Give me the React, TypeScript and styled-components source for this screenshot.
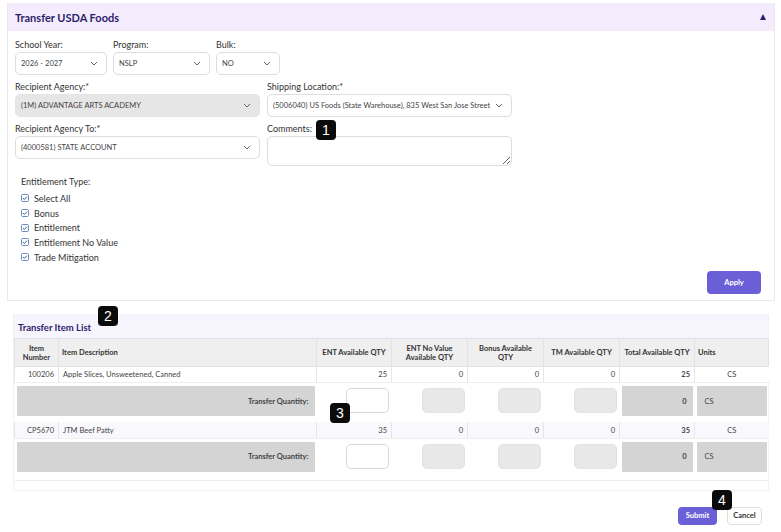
import React from 'react'
import styled, { createGlobalStyle } from 'styled-components'

const GlobalStyle = createGlobalStyle`
  html, body {
    margin: 0;
    padding: 0;
    background: #ffffff;
  }
  body {
    font-family: Lato, "Noto Sans", "Liberation Sans", sans-serif;
    color: #333333;
  }
`

const Page = styled.div`
  position: relative;
  width: 781px;
  height: 532px;
  padding: 3px 6px 0 7px;
  box-sizing: border-box;
`

const Panel = styled.section`
  border: 1px solid #e8e8e8;
  border-top: none;
  box-sizing: border-box;
`

const PanelHeader = styled.div`
  height: 28px;
  background: #f4ecfc;
  display: flex;
  align-items: center;
  justify-content: space-between;
  padding: 0 8px 0 7px;
`

const PanelTitle = styled.h2`
  margin: 0;
  font-size: 11px;
  font-weight: 700;
  color: #2c1d6b;
`

const Caret = styled.span`
  width: 0;
  height: 0;
  border-left: 3px solid transparent;
  border-right: 3px solid transparent;
  border-bottom: 6px solid #2c1d6b;
`

const PanelBody = styled.div`
  padding: 9px 13px 6px 7px;
  display: flex;
  flex-direction: column;
`

const FormRow = styled.div<{ $cols: string; $gap?: number; $last?: boolean }>`
  display: grid;
  grid-template-columns: ${({ $cols }) => $cols};
  column-gap: ${({ $gap }) => $gap ?? 6}px;
  align-items: start;
  margin-bottom: ${({ $last }) => ($last ? 0 : 7)}px;
`

const Field = styled.div`
  display: flex;
  flex-direction: column;
  gap: 2px;
`

const Label = styled.label`
  font-size: 9px;
  line-height: 10px;
  color: #333333;
`

const SelectBox = styled.div<{ $disabled?: boolean }>`
  height: 23px;
  box-sizing: border-box;
  border: 1px solid ${({ $disabled }) => ($disabled ? '#e4e4e4' : '#dddddd')};
  border-radius: 5px;
  background: ${({ $disabled }) => ($disabled ? '#e6e6e6' : '#ffffff')};
  display: flex;
  align-items: center;
  justify-content: space-between;
  padding: 0 8px 0 5px;
  font-size: 7.5px;
  color: #444444;
  white-space: nowrap;
  overflow: hidden;
`

const TextArea = styled.textarea`
  height: 30px;
  box-sizing: border-box;
  border: 1px solid #dddddd;
  border-radius: 5px;
  resize: vertical;
  font-family: inherit;
  margin: 0;
`

const EntitlementBlock = styled.div`
  padding: 11px 0 0 6px;
  display: flex;
  flex-direction: column;
`

const EntitlementTitle = styled.div`
  font-size: 9px;
  line-height: 10px;
  margin-bottom: 4px;
`

const CheckRow = styled.div`
  display: flex;
  align-items: center;
  gap: 5px;
  height: 14.7px;
  font-size: 9px;
  color: #333333;
`

const ActionsRow = styled.div`
  display: flex;
  justify-content: flex-end;
  padding-top: 7px;
`

const PrimaryButton = styled.button<{ $w: number; $h: number }>`
  width: ${({ $w }) => $w}px;
  height: ${({ $h }) => $h}px;
  border: none;
  border-radius: 4px;
  background: #6b5fd8;
  color: #ffffff;
  font-family: inherit;
  font-size: 7.5px;
  font-weight: 700;
  padding: 0;
`

const SecondaryButton = styled.button`
  width: 35px;
  height: 18px;
  border: 1px solid #dddddd;
  border-radius: 4px;
  background: #ffffff;
  color: #333333;
  font-family: inherit;
  font-size: 7.5px;
  font-weight: 700;
  padding: 0;
`

const ItemSection = styled.section`
  margin: 13px 0 0 6px;
  width: 756px;
  border: 1px solid #f2f2f2;
  border-top: none;
  box-sizing: border-box;
  padding-bottom: 9px;
`

const ItemHeader = styled.div`
  height: 24px;
  background: #f6f4fd;
  display: flex;
  align-items: center;
  padding: 2px 0 0 4px;
  box-sizing: border-box;
`

const ItemTitle = styled.h3`
  margin: 0;
  font-size: 9.5px;
  font-weight: 700;
  color: #2c1d6b;
`

const Table = styled.table`
  width: 100%;
  border-collapse: collapse;
  table-layout: fixed;
  font-size: 7.5px;
  border-bottom: 1px solid #ececec;
`

const Th = styled.th<{ $align?: string }>`
  height: 27px;
  background: #efefef;
  border: 1px solid #e2e2e2;
  font-weight: 700;
  color: #333333;
  line-height: 9px;
  padding: 0 3px;
  text-align: ${({ $align }) => $align || 'center'};
`

const DataRow = styled.tr<{ $tint?: boolean }>`
  background: ${({ $tint }) => ($tint ? '#f9f8fd' : '#ffffff')};
`

const Td = styled.td<{ $align?: string; $bold?: boolean }>`
  height: 16px;
  box-sizing: border-box;
  border-left: 1px solid #e6e6e6;
  border-bottom: 1px solid #eeeeee;
  padding: 0 4px;
  text-align: ${({ $align }) => $align || 'left'};
  font-weight: ${({ $bold }) => ($bold ? 700 : 400)};
  color: #444444;
  white-space: nowrap;
`

const QtyCell = styled.td`
  height: 39px;
  padding: 3px 2px 6px 2px;
  box-sizing: border-box;
  vertical-align: top;
`

const GreyBlock = styled.div<{ $align?: string }>`
  height: 30px;
  background: #d4d4d4;
  display: flex;
  align-items: center;
  justify-content: ${({ $align }) => $align || 'flex-end'};
  padding: 0 6px;
  box-sizing: border-box;
  font-size: 7.5px;
  font-weight: 700;
  color: #444444;
`

const UnitBlock = styled(GreyBlock)`
  font-weight: 400;
  padding-left: 8px;
`

const InputWrap = styled.div`
  display: flex;
  justify-content: flex-end;
  padding: 2px 1px 0 0;
`

const QtyInput = styled.div<{ $disabled?: boolean }>`
  width: 43px;
  height: 25px;
  box-sizing: border-box;
  border: 1px solid ${({ $disabled }) => ($disabled ? '#e2e2e2' : '#d8d8d8')};
  border-radius: 5px;
  background: ${({ $disabled }) => ($disabled ? '#e8e8e8' : '#ffffff')};
`

const EmptyCell = styled.td`
  height: 2px;
  padding: 0;
`

const BottomActions = styled.div`
  display: flex;
  justify-content: flex-end;
  gap: 10px;
  padding: 16px 19px 0 0;
  width: 781px;
  box-sizing: border-box;
  margin-left: -7px;
`

const Badge = styled.div<{ $x: number; $y: number }>`
  position: absolute;
  left: ${({ $x }) => $x}px;
  top: ${({ $y }) => $y}px;
  width: 20px;
  height: 20px;
  border-radius: 4px;
  background: #0b0b0b;
  color: #ffffff;
  font-family: "Liberation Sans", Arial, sans-serif;
  font-size: 14px;
  display: flex;
  align-items: center;
  justify-content: center;
`

const Chevron = () => (
  <svg width="8" height="5" viewBox="0 0 8 5">
    <polyline points="1,1 4,4 7,1" fill="none" stroke="#666" strokeWidth="1" />
  </svg>
)

const CheckIcon = () => (
  <svg width="8" height="8" viewBox="0 0 8 8">
    <rect x="0.5" y="0.5" width="7" height="7" rx="1" fill="#ffffff" stroke="#6a8cc2" />
    <polyline points="2,4.2 3.4,5.5 6,2.6" fill="none" stroke="#3a5f9c" strokeWidth="1" />
  </svg>
)

const Select = ({ value, disabled }: { value: string; disabled?: boolean }) => (
  <SelectBox $disabled={disabled}>
    <span>{value}</span>
    <Chevron />
  </SelectBox>
)

const entitlementTypes = ['Select All', 'Bonus', 'Entitlement', 'Entitlement No Value', 'Trade Mitigation']

const items = [
  { number: '100206', desc: 'Apple Slices, Unsweetened, Canned', ent: 25, total: 25 },
  { number: 'CP5670', desc: 'JTM Beef Patty', ent: 35, total: 35 },
]

export default function App() {
  return (
    <>
      <GlobalStyle />
      <Page>
        <Panel>
          <PanelHeader>
            <PanelTitle>Transfer USDA Foods</PanelTitle>
            <Caret />
          </PanelHeader>
          <PanelBody>
            <FormRow $cols="92px 97px 64px">
              <Field>
                <Label>School Year:</Label>
                <Select value="2026 - 2027" />
              </Field>
              <Field>
                <Label>Program:</Label>
                <Select value="NSLP" />
              </Field>
              <Field>
                <Label>Bulk:</Label>
                <Select value="NO" />
              </Field>
            </FormRow>
            <FormRow $cols="245px 245px" $gap={7}>
              <Field>
                <Label>Recipient Agency:*</Label>
                <Select value="(1M) ADVANTAGE ARTS ACADEMY" disabled />
              </Field>
              <Field>
                <Label>Shipping Location:*</Label>
                <Select value="(5006040) US Foods (State Warehouse), 835 West San Jose Street" />
              </Field>
            </FormRow>
            <FormRow $cols="245px 245px" $gap={7} $last>
              <Field>
                <Label>Recipient Agency To:*</Label>
                <Select value="(4000581) STATE ACCOUNT" />
              </Field>
              <Field>
                <Label>Comments:</Label>
                <TextArea />
              </Field>
            </FormRow>
            <EntitlementBlock>
              <EntitlementTitle>Entitlement Type:</EntitlementTitle>
              {entitlementTypes.map((t) => (
                <CheckRow key={t}>
                  <CheckIcon />
                  {t}
                </CheckRow>
              ))}
            </EntitlementBlock>
            <ActionsRow>
              <PrimaryButton $w={54} $h={23}>Apply</PrimaryButton>
            </ActionsRow>
          </PanelBody>
        </Panel>

        <ItemSection>
          <ItemHeader>
            <ItemTitle>Transfer Item List</ItemTitle>
          </ItemHeader>
          <Table>
            <colgroup>
              <col style={{ width: 44 }} />
              <col style={{ width: 258 }} />
              <col style={{ width: 75 }} />
              <col style={{ width: 76 }} />
              <col style={{ width: 76 }} />
              <col style={{ width: 76 }} />
              <col style={{ width: 75 }} />
              <col style={{ width: 74 }} />
            </colgroup>
            <thead>
              <tr>
                <Th>Item<br />Number</Th>
                <Th $align="left">Item Description</Th>
                <Th>ENT Available QTY</Th>
                <Th>ENT No Value<br />Available QTY</Th>
                <Th>Bonus Available<br />QTY</Th>
                <Th>TM Available QTY</Th>
                <Th>Total Available QTY</Th>
                <Th $align="left">Units</Th>
              </tr>
            </thead>
            <tbody>
              {items.map((item, i) => (
                <React.Fragment key={item.number}>
                  <DataRow $tint={i === 1}>
                    <Td $align="right">{item.number}</Td>
                    <Td>{item.desc}</Td>
                    <Td $align="right">{item.ent}</Td>
                    <Td $align="right">0</Td>
                    <Td $align="right">0</Td>
                    <Td $align="right">0</Td>
                    <Td $align="right" $bold>{item.total}</Td>
                    <Td $align="center">CS</Td>
                  </DataRow>
                  <tr>
                    <QtyCell colSpan={2}>
                      <GreyBlock>Transfer Quantity:</GreyBlock>
                    </QtyCell>
                    <QtyCell>
                      <InputWrap><QtyInput /></InputWrap>
                    </QtyCell>
                    <QtyCell>
                      <InputWrap><QtyInput $disabled /></InputWrap>
                    </QtyCell>
                    <QtyCell>
                      <InputWrap><QtyInput $disabled /></InputWrap>
                    </QtyCell>
                    <QtyCell>
                      <InputWrap><QtyInput $disabled /></InputWrap>
                    </QtyCell>
                    <QtyCell>
                      <GreyBlock>0</GreyBlock>
                    </QtyCell>
                    <QtyCell>
                      <UnitBlock $align="flex-start">CS</UnitBlock>
                    </QtyCell>
                  </tr>
                </React.Fragment>
              ))}
              <tr><EmptyCell colSpan={8} /></tr>
            </tbody>
          </Table>
        </ItemSection>

        <BottomActions>
          <PrimaryButton $w={39} $h={18}>Submit</PrimaryButton>
          <SecondaryButton>Cancel</SecondaryButton>
        </BottomActions>

        <Badge $x={316} $y={120}>1</Badge>
        <Badge $x={98} $y={306}>2</Badge>
        <Badge $x={330} $y={403}>3</Badge>
        <Badge $x={712} $y={490}>4</Badge>
      </Page>
    </>
  )
}
